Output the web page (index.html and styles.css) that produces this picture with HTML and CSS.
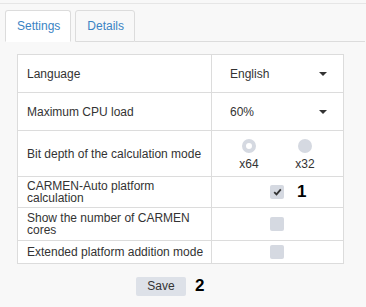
FILE: index.html
```html
<!DOCTYPE html>
<html>
<head>
<meta charset="utf-8">
<link rel="stylesheet" href="styles.css">
</head>
<body>
<div class="page">
  <div class="tabs">
    <div class="tab active">Settings</div>
    <div class="tab">Details</div>
    <div class="tab-rest"></div>
  </div>
  <div class="panel">
    <table class="grid">
      <tr class="r-lang">
        <td class="label">Language</td>
        <td class="value"><div class="select"><span>English</span><span class="caret"></span></div></td>
      </tr>
      <tr class="r-cpu">
        <td class="label">Maximum CPU load</td>
        <td class="value"><div class="select"><span>60%</span><span class="caret"></span></div></td>
      </tr>
      <tr class="r-bit">
        <td class="label">Bit depth of the calculation mode</td>
        <td class="value">
          <div class="radios">
            <div class="radio-item"><span class="radio on"></span><span class="rlabel">x64</span></div>
            <div class="radio-item"><span class="radio"></span><span class="rlabel">x32</span></div>
          </div>
        </td>
      </tr>
      <tr class="r-auto">
        <td class="label">CARMEN-Auto platform calculation</td>
        <td class="value"><div class="cbcell"><span class="cb checked"><svg width="9" height="8" viewBox="0 0 9 8"><path d="M1.2 4.2 L3.5 6.4 L7.8 1.4" fill="none" stroke="#333" stroke-width="1.8"/></svg></span><span class="mark">1</span></div></td>
      </tr>
      <tr class="r-cores">
        <td class="label">Show the number of CARMEN cores</td>
        <td class="value"><div class="cbcell"><span class="cb"></span></div></td>
      </tr>
      <tr class="r-ext">
        <td class="label">Extended platform addition mode</td>
        <td class="value"><div class="cbcell"><span class="cb"></span></div></td>
      </tr>
    </table>
    <div class="actions">
      <button class="save">Save</button><span class="mark2">2</span>
    </div>
  </div>
</div>
</body>
</html>
```
FILE: styles.css
```css
html, body {
  margin: 0;
  padding: 0;
  background: #f8f8f8;
}
body {
  font-family: "Liberation Sans", Arial, sans-serif;
  font-size: 12px;
  color: #333;
}
.page {
  margin-top: 3px;
  border-top: 1px solid #e6e6e6;
  padding-top: 6px;
}
.tabs {
  display: flex;
  align-items: flex-end;
  padding-left: 5px;
  height: 32px;
}
.tab {
  box-sizing: border-box;
  height: 32px;
  padding: 0 10px 0 11px;
  line-height: 30px;
  color: #3a84c4;
  border: 1px solid #dcdcdc;
  border-bottom: 1px solid #dcdcdc;
  border-radius: 3px 3px 0 0;
  background: #f8f8f8;
  margin-right: 4px;
}
.tab.active {
  background: #fff;
  border-bottom-color: #fff;
}
.tab-rest {
  flex: 0 0 230px;
  height: 32px;
  box-sizing: border-box;
  border-bottom: 1px solid #dcdcdc;
  margin-left: -4px;
}
.panel {
  padding: 12px 0 0 17px;
}
.grid {
  border-collapse: collapse;
  width: 327px;
  background: #fff;
}
.grid td {
  border: 1px solid #dcdcdc;
  padding: 0;
  vertical-align: middle;
}
.label {
  width: 180px;
  padding-left: 9px !important;
  padding-right: 4px !important;
  line-height: 12px;
}
.value {
  padding: 0 !important;
}
.r-lang td, .r-cpu td { height: 37px; }
.r-bit td { height: 45px; }
.r-auto td { height: 30px; }
.r-cores td { height: 32px; }
.r-ext td { height: 22px; }
.select {
  display: flex;
  justify-content: space-between;
  align-items: center;
  padding: 0 16px 0 18px;
}
.caret {
  width: 0;
  height: 0;
  border-left: 4px solid transparent;
  border-right: 4px solid transparent;
  border-top: 4px solid #333;
}
.radios {
  display: flex;
  padding-left: 24px;
  gap: 30px;
  padding-top: 2px;
}
.radio-item {
  display: flex;
  flex-direction: column;
  align-items: center;
  gap: 5px;
  width: 26px;
}
.radio {
  box-sizing: border-box;
  width: 14px;
  height: 14px;
  border-radius: 50%;
  background: #d5d9e1;
}
.radio.on {
  border: 4px solid #d5d9e1;
  background: #fff;
}
.rlabel {
  line-height: 12px;
}
.cbcell {
  display: flex;
  align-items: center;
  padding-left: 58px;
}
.cb {
  box-sizing: border-box;
  width: 14px;
  height: 14px;
  border-radius: 2px;
  background: #d5d9e1;
  display: flex;
  align-items: center;
  justify-content: center;
}
.mark {
  font-weight: bold;
  font-size: 17px;
  color: #000;
  margin-left: 13px;
  line-height: 16px;
}
.actions {
  display: flex;
  align-items: center;
  padding-left: 119px;
  padding-top: 12px;
}
.save {
  font-family: "Liberation Sans", Arial, sans-serif;
  font-size: 12px;
  color: #333;
  background: #dde1e8;
  border: none;
  border-radius: 2px;
  width: 50px;
  height: 19px;
  padding: 0;
}
.mark2 {
  font-weight: bold;
  font-size: 17px;
  color: #000;
  margin-left: 9px;
}
```
